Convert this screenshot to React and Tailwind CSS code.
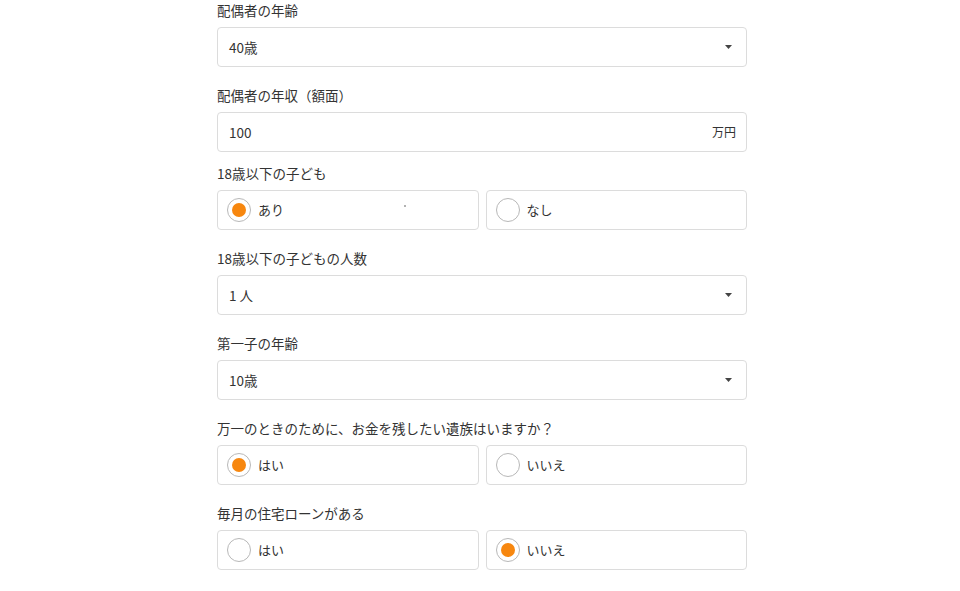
const font = { fontFamily: '"Noto Sans CJK JP", "Noto Sans", sans-serif' };

const Label = ({ children }) => (
  <div className="h-5 leading-5 text-[13.5px] text-[#333] mb-[7px]">{children}</div>
);

const Caret = () => (
  <svg width="7" height="4" viewBox="0 0 7 4">
    <path d="M0 0 H7 L3.5 4 Z" fill="#444" />
  </svg>
);

const SelectField = ({ label, value, className = 'mb-[18px]' }) => (
  <div className={className}>
    <Label>{label}</Label>
    <div className="h-10 flex items-center justify-between pl-[11px] pr-[14px] bg-white border border-[#dcdcdc] rounded-[4px] text-[13.5px] text-[#333]">
      <span>{value}</span>
      <Caret />
    </div>
  </div>
);

const Radio = ({ checked, text, stray }) => (
  <div className="relative flex-1 h-10 flex items-center pl-[9px] bg-white border border-[#dcdcdc] rounded-[4px]">
    <span className="w-[24px] h-[24px] rounded-full border border-[#b8b8b8] flex items-center justify-center mr-[7px]">
      {checked && <span className="w-[14px] h-[14px] rounded-full bg-[#f7870f]" />}
    </span>
    <span className="text-[13px] text-[#333]">{text}</span>
    {stray && <span className="absolute left-[186px] top-[14px] w-[2px] h-[2px] rounded-full bg-[#999]" />}
  </div>
);

const RadioField = ({ label, options, selected, stray }) => (
  <div className="mb-[18px]">
    <Label>{label}</Label>
    <div className="flex gap-[7px]">
      {options.map((o, i) => (
        <Radio key={o} text={o} checked={i === selected} stray={stray && i === 0} />
      ))}
    </div>
  </div>
);

export default function App() {
  return (
    <div className="min-h-screen bg-white" style={font}>
      <div className="w-[530px] ml-[217px] pt-0">
        <SelectField label="配偶者の年齢" value="40歳" />
        <div className="mb-[11px]">
          <Label>配偶者の年収（額面）</Label>
          <div className="h-10 flex items-center justify-between pl-[11px] pr-[10px] bg-white border border-[#dcdcdc] rounded-[4px] text-[#333]">
            <span className="text-[13.5px]">100</span>
            <span className="text-[12px]">万円</span>
          </div>
        </div>
        <RadioField label="18歳以下の子ども" options={['あり', 'なし']} selected={0} stray />
        <SelectField label="18歳以下の子どもの人数" value="1 人" />
        <SelectField label="第一子の年齢" value="10歳" />
        <RadioField label="万一のときのために、お金を残したい遺族はいますか？" options={['はい', 'いいえ']} selected={0} />
        <RadioField label="毎月の住宅ローンがある" options={['はい', 'いいえ']} selected={1} />
      </div>
    </div>
  );
}
